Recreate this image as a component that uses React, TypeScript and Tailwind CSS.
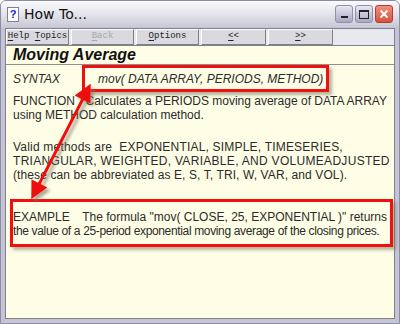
import React from 'react';

const toolbarButtons = [
  { label: 'Help Topics', u: 0, u2: 5, w: 'w-[63px]', disabled: false },
  { label: 'Back', u: 0, w: 'w-[63px]', disabled: true },
  { label: 'Options', u: 0, w: 'w-[63px]', disabled: false },
  { label: '<<', u: 0, w: 'w-[65px]', disabled: false },
  { label: '>>', u: 0, w: 'w-[65px]', disabled: false },
];

function Underlined({ text, idx, idx2 }: { text: string; idx: number; idx2?: number }) {
  return (
    <span className="whitespace-pre">
      {text.split('').map((ch, i) =>
        i === idx || i === idx2 ? (
          <span key={i} className="underline underline-offset-2">{ch}</span>
        ) : (
          <span key={i}>{ch}</span>
        )
      )}
    </span>
  );
}

export default function App() {
  return (
    <div className="w-[400px] h-[324px] bg-[#c4c4d4] flex flex-col overflow-hidden rounded-t-[6px] border border-[#8c8ca4]">
      {/* Title bar */}
      <div className="h-[26px] flex items-center px-[6px] bg-gradient-to-b from-[#fbfbfd] via-[#e4e4ec] to-[#c9c9d6] shrink-0">
        <div className="w-[12px] h-[15px] bg-white border border-[#7f7f99] flex items-center justify-center text-[11px] font-bold text-[#1a1ae0] leading-none [font-family:'Liberation_Sans',sans-serif]">
          ?
        </div>
        <span className="ml-[5px] text-[14px] text-[#111] [font-family:'DejaVu_Sans',sans-serif]">How To...</span>
        <div className="ml-auto flex gap-[2px] items-center">
          <div className="w-[18px] h-[18px] rounded-[3px] border border-[#9090a8] bg-gradient-to-b from-[#e8e8f4] to-[#a8a8c4] flex items-end justify-center pb-[4px]">
            <div className="w-[7px] h-[2px] bg-[#222]" />
          </div>
          <div className="w-[18px] h-[18px] rounded-[3px] border border-[#9090a8] bg-gradient-to-b from-[#e8e8f4] to-[#a8a8c4] flex items-center justify-center">
            <div className="w-[10px] h-[9px] border border-[#222] border-t-2" />
          </div>
          <div className="w-[18px] h-[18px] rounded-[3px] border border-[#b04030] bg-gradient-to-b from-[#f0907c] to-[#d8503c] flex items-center justify-center">
            <svg width="10" height="10" viewBox="0 0 10 10">
              <path d="M1.5 1.5 L8.5 8.5 M8.5 1.5 L1.5 8.5" stroke="white" strokeWidth="2" />
            </svg>
          </div>
        </div>
      </div>

      {/* Body frame */}
      <div className="flex-1 flex flex-col px-[4px] pb-[4px] pt-[1px]">
        {/* Toolbar */}
        <div className="flex h-[18px] bg-[#e8e8f0] border border-[#808090] shrink-0 [font-family:'Liberation_Mono',monospace] text-[9px]">
          {toolbarButtons.map((b, i) => (
            <div
              key={i}
              className={`${b.w} h-full mr-[2px] flex items-center justify-center border-t border-l border-white border-r border-b border-r-[#808080] border-b-[#808080] bg-[#d9d9df] ${
                b.disabled ? 'text-[#a8a8b0]' : 'text-[#222]'
              }`}
            >
              <Underlined text={b.label} idx={b.u} idx2={b.u2} />
            </div>
          ))}
          <div className="flex-1" />
        </div>

        {/* Content */}
        <div className="relative flex-1 bg-[#fefde6] border-l border-r border-b border-[#808090] text-[#2b2b2b] text-[12px] leading-[14px] whitespace-nowrap [font-family:'Liberation_Sans',Arial,sans-serif]">
          <div className="h-[19px] px-[7px] flex items-end border-b border-[#909090]">
            <span className="text-[16px] font-bold italic text-[#111] leading-[18px]">Moving Average</span>
          </div>

          <div className="flex px-[7px] mt-[7px] italic">
            <span className="w-[85px]">SYNTAX</span>
            <span>mov( DATA ARRAY, PERIODS, METHOD)</span>
          </div>

          <div className="px-[7px] mt-[8px]">
            <div className="flex">
              <span className="w-[85px]">FUNCTION</span>
              <span>Calculates a PERIODS moving average of DATA ARRAY</span>
            </div>
            <div>using METHOD calculation method.</div>
          </div>

          <div className="px-[7px] mt-[18px]">
            <div className="tracking-[0.2px]">Valid methods are&nbsp; EXPONENTIAL, SIMPLE, TIMESERIES,</div>
            <div className="tracking-[0.3px]">TRIANGULAR, WEIGHTED, VARIABLE, AND VOLUMEADJUSTED</div>
            <div className="tracking-[0.1px]">(these can be abbreviated as E, S, T, TRI, W, VAR, and VOL).</div>
          </div>

          <div className="px-[7px] mt-[28px]">
            <div className="flex">
              <span className="w-[85px]">EXAMPLE</span>
              <span>The formula "mov( CLOSE, 25, EXPONENTIAL )" returns</span>
            </div>
            <div className="tracking-[-0.35px]">the value of a 25-period exponential moving average of the closing prices.</div>
          </div>

          {/* Annotation boxes */}
          <div className="absolute left-[76px] top-[19px] w-[247px] h-[27px] border-[3px] border-[#f01010] shadow-[3px_3px_3px_rgba(120,120,100,0.55)]" />
          <div className="absolute left-[4px] top-[153px] w-[383px] h-[48px] border-[3px] border-[#f01010] shadow-[3px_3px_3px_rgba(120,120,100,0.55)]" />

          {/* Annotation arrow */}
          <svg className="absolute left-0 top-0 pointer-events-none" width="390" height="280">
            <defs>
              <marker id="ah" markerWidth="6" markerHeight="6" refX="4" refY="3" orient="auto-start-reverse" markerUnits="strokeWidth">
                <path d="M0 0 L6 3 L0 6 Z" fill="#f01010" />
              </marker>
              <filter id="sh" x="-20%" y="-20%" width="140%" height="140%">
                <feDropShadow dx="3" dy="3" stdDeviation="1.5" floodColor="#787864" floodOpacity="0.6" />
              </filter>
            </defs>
            <line x1="82" y1="43" x2="28" y2="148" stroke="#f01010" strokeWidth="3" markerStart="url(#ah)" markerEnd="url(#ah)" filter="url(#sh)" />
          </svg>
        </div>
      </div>
    </div>
  );
}
